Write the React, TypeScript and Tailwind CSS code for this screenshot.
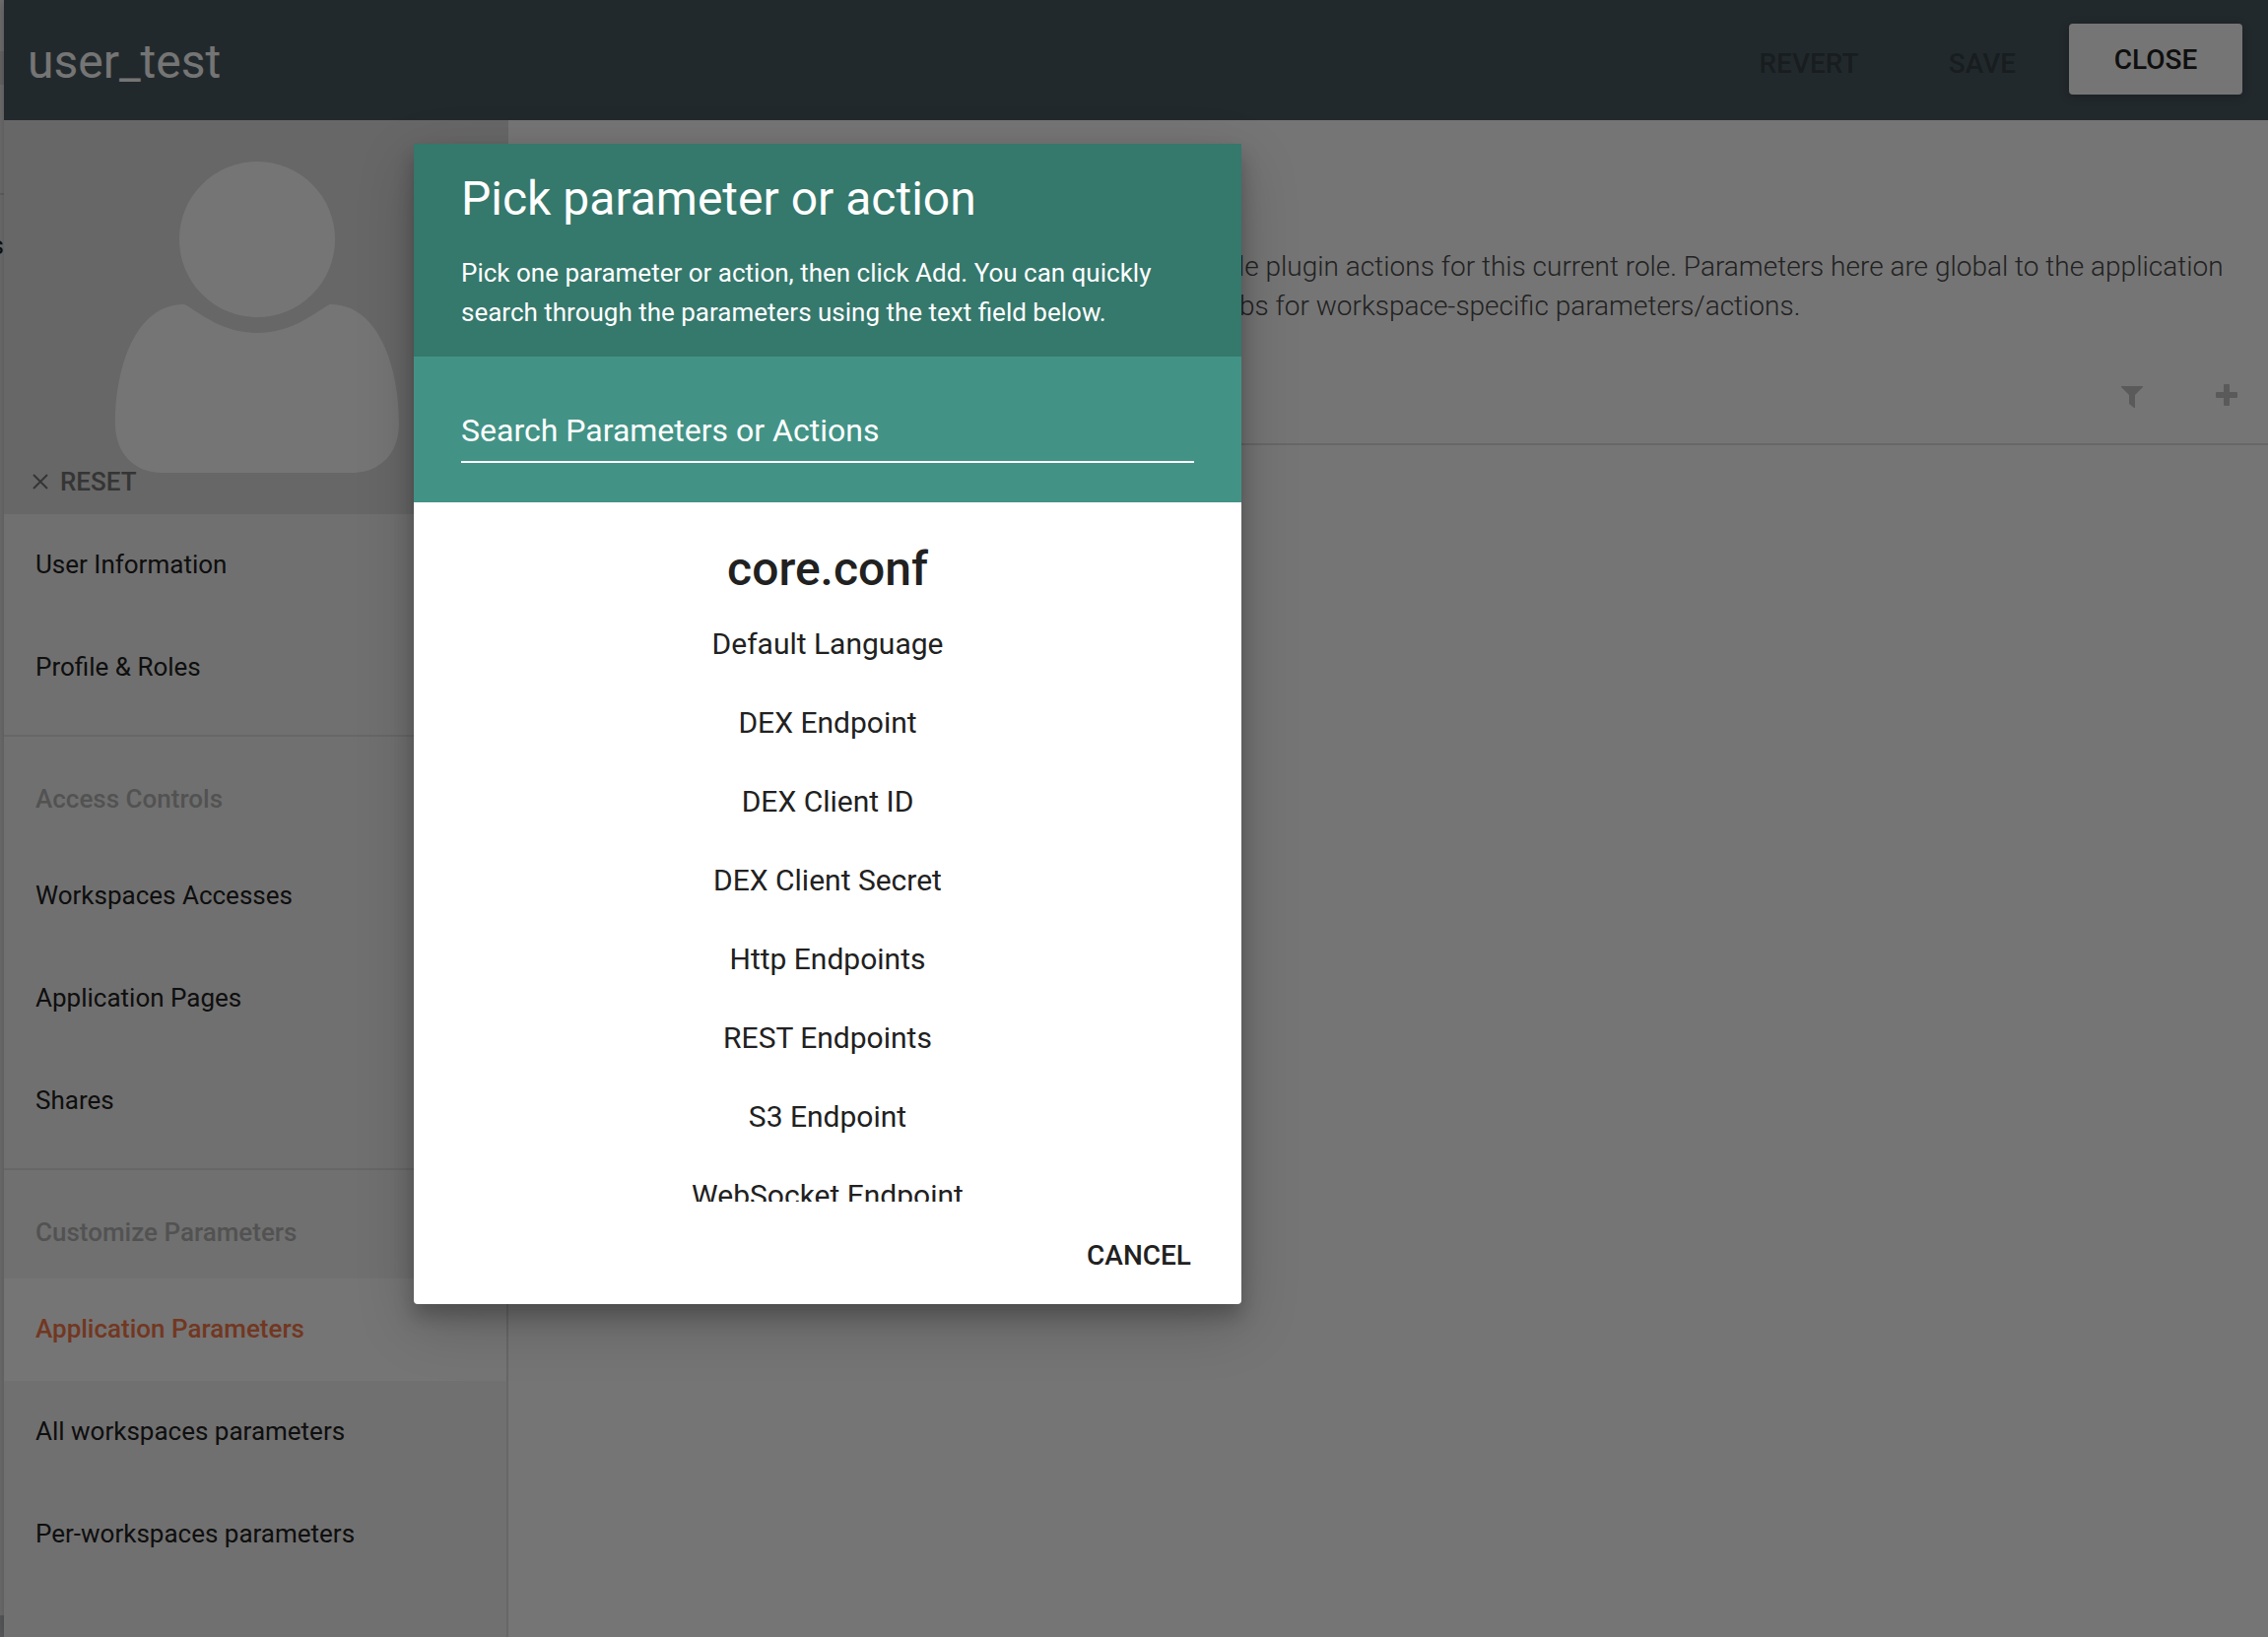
import React from "react";

const accountItems = ["User Information", "Profile & Roles"];
const accessItems = ["Workspaces Accesses", "Application Pages", "Shares"];
const parameterItems = [
  "Application Parameters",
  "All workspaces parameters",
  "Per-workspaces parameters",
];

const coreParameters = [
  "Default Language",
  "DEX Endpoint",
  "DEX Client ID",
  "DEX Client Secret",
  "Http Endpoints",
  "REST Endpoints",
  "S3 Endpoint",
  "WebSocket Endpoint",
];

function MenuItem({ label, active = false }: { label: string; active?: boolean }) {
  return (
    <li>
      <button
        type="button"
        aria-current={active ? "page" : undefined}
        className={
          active
            ? "flex h-26 w-full items-center bg-white px-8 pb-[2px] text-left font-medium text-[#f97849]"
            : "flex h-26 w-full items-center px-8 pb-[2px] text-left text-[#212121]"
        }
      >
        {label}
      </button>
    </li>
  );
}

function MenuHeading({ children }: { children: React.ReactNode }) {
  return (
    <h2 className="flex h-[110px] items-center px-8 pt-4 font-medium text-[#b4b4b4]">{children}</h2>
  );
}

function Avatar() {
  return (
    <svg viewBox="0 0 290 316" className="w-[290px]" fill="#ffffff" aria-hidden="true">
      <circle cx="145" cy="79" r="79" />
      <path d="M71 145C84 151 107 174 145 174S206 151 219 145C270 145 289 212 289 266C289 296 270 316 241 316H49C20 316 1 296 1 266C1 212 20 145 71 145Z" />
    </svg>
  );
}

function Sidebar() {
  return (
    <aside className="w-[512px] shrink-0 border-r-2 border-[#e0e0e0] bg-[#f4f4f4] text-[26px]">
      <div className="relative flex h-[400px] items-start justify-center bg-[#e0e0e0] pt-[42px] pl-1">
        <Avatar />
        <button
          type="button"
          className="absolute bottom-[17px] left-[29px] flex h-8 items-center gap-3 font-medium text-[#737373]"
        >
          <svg viewBox="0 0 16 16" className="w-4" stroke="currentColor" strokeWidth="2" aria-hidden="true">
            <path d="M1 1L15 15M15 1L1 15" />
          </svg>
          RESET
        </button>
      </div>
      <nav>
        <ul className="border-b-2 border-[#e0e0e0] pb-4">
          {accountItems.map((label) => (
            <MenuItem key={label} label={label} />
          ))}
        </ul>
        <MenuHeading>Access Controls</MenuHeading>
        <ul className="border-b-2 border-[#e0e0e0] pb-4">
          {accessItems.map((label) => (
            <MenuItem key={label} label={label} />
          ))}
        </ul>
        <MenuHeading>Customize Parameters</MenuHeading>
        <ul>
          {parameterItems.map((label, index) => (
            <MenuItem key={label} label={label} active={index === 0} />
          ))}
        </ul>
      </nav>
    </aside>
  );
}

function TopBar() {
  return (
    <header className="flex h-[122px] shrink-0 items-start justify-between bg-[#4a5960] pr-[26px] pl-6 text-[28px] font-medium">
      <h1 className="pt-[31px] text-[48px] leading-[64px] font-normal text-white">user_test</h1>
      <div className="flex items-start pt-6">
        <button type="button" disabled className="h-20 w-44 pt-[2px] text-black/30">
          REVERT
        </button>
        <button type="button" disabled className="h-20 w-44 pt-[2px] text-black/30">
          SAVE
        </button>
        <button
          type="button"
          className="h-18 w-44 rounded-sm bg-white pt-[2px] text-[#212121] shadow-[0_2px_12px_rgba(0,0,0,0.12),0_2px_8px_rgba(0,0,0,0.12)]"
        >
          CLOSE
        </button>
      </div>
    </header>
  );
}

function Content() {
  return (
    <main className="min-w-0 flex-1 bg-white">
      <div className="flex h-[330px] flex-col border-b-2 border-[#e0e0e0] pr-7 pl-[43px]">
        <p className="pt-[129px] text-[28px] leading-10 font-light text-[#4a4a4a]">
          Customize all the application parameters or enable/disable plugin actions for this current
          role. Parameters here are global to the application
          <br />
          and to all of the workspaces. Please, use the dedicated tabs for workspace-specific
          parameters/actions.
        </p>
        <div className="flex justify-end gap-[72px] pt-[59px] pr-[2px] text-[#c4c4c4]">
          <button type="button" aria-label="Filter">
            <svg viewBox="0 0 24 24" className="w-6" fill="currentColor" aria-hidden="true">
              <path d="M1 2H23V3L15 11V24H14L9 20V11L1 3Z" />
            </svg>
          </button>
          <button type="button" aria-label="Add">
            <svg viewBox="0 0 24 24" className="w-6" fill="currentColor" aria-hidden="true">
              <rect x="1" y="8" width="22" height="6" rx="1" />
              <rect x="9" y="0" width="6" height="22" rx="1" />
            </svg>
          </button>
        </div>
      </div>
    </main>
  );
}

function PickerDialog() {
  return (
    <div
      role="dialog"
      aria-modal="true"
      aria-labelledby="picker-title"
      className="w-[840px] overflow-hidden rounded-b-sm bg-white text-[#212121] shadow-[0_20px_60px_rgba(0,0,0,0.19),0_12px_20px_rgba(0,0,0,0.23)]"
    >
      <div className="bg-[#35786c] px-12 pt-6 pb-[25px] text-white">
        <h2 id="picker-title" className="text-[48px] leading-[64px]">
          Pick parameter or action
        </h2>
        <p className="pt-[23px] text-[26px] leading-10">
          Pick one parameter or action, then click Add. You can quickly search through the
          parameters using the text field below.
        </p>
      </div>
      <div className="bg-[#429386] px-12 pt-11 pb-10">
        <input
          type="text"
          aria-label="Search Parameters or Actions"
          placeholder="Search Parameters or Actions"
          className="block h-16 w-full border-b-2 border-white bg-transparent text-[32px] text-white outline-none placeholder:text-white"
        />
      </div>
      <div className="h-[710px] overflow-y-auto pt-8 text-center [scrollbar-width:none]">
        <h3 className="text-[48px] leading-[72px] font-medium">core.conf</h3>
        <ul className="text-[30px]">
          {coreParameters.map((name) => (
            <li key={name}>
              <button type="button" className="h-20 w-full pb-[2px]">
                {name}
              </button>
            </li>
          ))}
        </ul>
      </div>
      <div className="flex justify-end px-4 pt-5 pb-4">
        <button type="button" className="h-17 px-[35px] pt-[2px] text-[28px] font-medium">
          CANCEL
        </button>
      </div>
    </div>
  );
}

export default function App() {
  return (
    <div className="relative flex h-screen overflow-hidden bg-white font-[Roboto,sans-serif]">
      <div className="flex w-1 shrink-0 flex-col bg-[#f4f4f4] text-[26px] text-[#212121]">
        <div className="h-[54px] border-b-2 border-[#e0e0e0]" />
        <div className="h-8 bg-[#e0e0e0]" />
        <div className="h-[112px] border-b-2 border-[#d8d8d8]" />
        <div className="flex h-26 items-center justify-end overflow-hidden pb-[2px]">s</div>
        <div className="flex-1" />
        <div className="h-[22px] bg-[#c2c7cc]" />
      </div>
      <div className="flex min-w-0 flex-1 flex-col shadow-[0_0_12px_rgba(0,0,0,0.3)]">
        <TopBar />
        <div className="flex min-h-0 flex-1">
          <Sidebar />
          <Content />
        </div>
      </div>
      <div className="absolute inset-0 flex items-start bg-black/54 pt-[146px] pl-[420px]">
        <PickerDialog />
      </div>
    </div>
  );
}
